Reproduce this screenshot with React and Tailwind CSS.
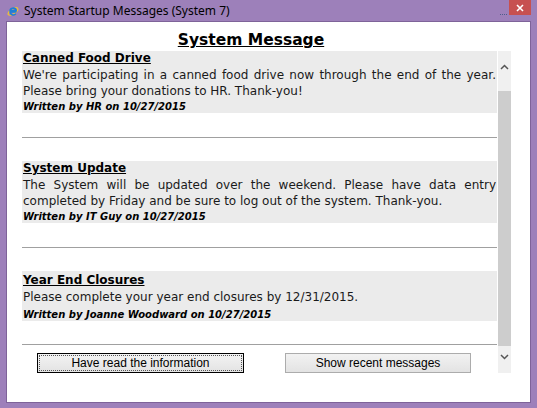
import React from 'react'

const messages = [
  {
    title: 'Canned Food Drive',
    body: ["We're participating in a canned food drive now through the end of the year. Please bring your donations to HR. Thank-you!"],
    by: 'Written by HR on 10/27/2015',
  },
  {
    title: 'System Update',
    body: ['The System will be updated over the weekend. Please have data entry completed by Friday and be sure to log out of the system. Thank-you.'],
    by: 'Written by IT Guy on 10/27/2015',
  },
  {
    title: 'Year End Closures',
    body: ['Please complete your year end closures by 12/31/2015.'],
    by: 'Written by Joanne Woodward on 10/27/2015',
  },
]

function IeIcon() {
  return (
    <svg width="12" height="12" viewBox="0 0 12 12">
      <ellipse cx="6" cy="6.5" rx="5.6" ry="2.4" fill="none" stroke="#f1c232" strokeWidth="1.2" transform="rotate(-35 6 6.5)" />
      <path d="M9.4 7 H3.2 A3 3 0 0 1 9.2 5.6 H3.4 M3.3 7.4 A3 3 0 0 0 8.8 8.6" fill="none" stroke="#1e7fd6" strokeWidth="1.6" />
    </svg>
  )
}

function Message({ m, last }) {
  return (
    <div className={last ? 'bg-[#ebebeb] pt-[2px]' : 'bg-[#ebebeb]'}>
      <div className="font-bold underline text-[12px] leading-[14px] px-[1px] text-black">{m.title}</div>
      {m.body.map((b, i) => (
        <p key={i} className="text-[12px] leading-[16px] text-justify px-[1px] mt-[2px]">{b}</p>
      ))}
      <div className={`font-bold italic text-[10px] leading-[12px] px-[1px] text-black ${last ? 'mt-[4px]' : 'mt-[2px]'}`}>{m.by}</div>
    </div>
  )
}

export default function App() {
  return (
    <div className="w-[537px] h-[408px] bg-[#9d80ba] flex flex-col overflow-hidden">
      <div className="h-[21px] flex items-start">
        <div className="pl-[7px] pt-[5px]"><IeIcon /></div>
        <div className="pl-[5px] pt-[3px] text-[12px] leading-[16px] text-black" style={{ fontFamily: '"Segoe UI", "Noto Sans", sans-serif' }}>
          System Startup Messages (System 7)
        </div>
        <div className="ml-auto flex items-start">
          <div className="flex gap-[1px] mt-[14px] mr-[2px]">
            <span className="w-[1px] h-[1px] bg-[#4d5d8a]" />
            <span className="w-[1px] h-[1px] bg-[#4d5d8a]" />
            <span className="w-[1px] h-[1px] bg-[#4d5d8a]" />
            <span className="w-[1px] h-[1px] bg-[#4d5d8a]" />
          </div>
          <div className="w-[22px] h-[15px] bg-[#c75050] flex items-center justify-center mr-[6px]">
            <svg width="8" height="8" viewBox="0 0 8 8">
              <path d="M1 1 L7 7 M7 1 L1 7" stroke="#fff" strokeWidth="1.6" />
            </svg>
          </div>
        </div>
      </div>
      <div className="mx-[6px] h-[382px] border border-[#7e6399] bg-white text-[#1a1a1a]" style={{ fontFamily: '"DejaVu Sans", Verdana, sans-serif' }}>
        <div className="w-[488px] text-center pt-[8px] text-[15.5px] leading-[20px] font-bold underline text-black">System Message</div>
        <div className="flex pl-[15px] mt-[1px]">
          <div className="w-[475px]">
            {messages.map((m, i) => {
              const last = i === messages.length - 1
              return (
                <div key={i}>
                  <Message m={m} last={last} />
                  {last ? (
                    <div className="h-px bg-[#a0a0a0] mt-[23px]" />
                  ) : (
                    <div className="h-px bg-[#a0a0a0] mt-[24px] mb-[23px]" />
                  )}
                </div>
              )
            })}
            <div className="flex pl-[15px] gap-[41px] mt-[8px]" style={{ fontFamily: '"Liberation Sans", Arial, sans-serif' }}>
              <button className="w-[207px] h-[20px] border border-black bg-gradient-to-b from-[#f3f3f3] to-[#e3e3e3] p-[1px] text-[12px] text-black">
                <div className="w-full h-full border border-dotted border-[#555] flex items-center justify-center leading-none">Have read the information</div>
              </button>
              <button className="w-[186px] h-[20px] border border-[#acacac] bg-gradient-to-b from-[#f2f2f2] to-[#e3e3e3] text-[12px] text-black flex items-center justify-center leading-none">
                Show recent messages
              </button>
            </div>
          </div>
          <div className="w-[13px] ml-[1px] h-[322px] flex flex-col">
            <div className="h-[40px] bg-[#f0f0f0] flex justify-center pt-[13px]">
              <svg width="9" height="6" viewBox="0 0 9 6"><path d="M1 5 L4.5 1.5 L8 5" fill="none" stroke="#555" strokeWidth="1.5" /></svg>
            </div>
            <div className="flex-1 bg-[#cdcdcd]" />
            <div className="h-[27px] bg-[#f0f0f0] flex justify-center pt-[8px]">
              <svg width="9" height="6" viewBox="0 0 9 6"><path d="M1 1 L4.5 4.5 L8 1" fill="none" stroke="#555" strokeWidth="1.5" /></svg>
            </div>
          </div>
        </div>
      </div>
    </div>
  )
}
